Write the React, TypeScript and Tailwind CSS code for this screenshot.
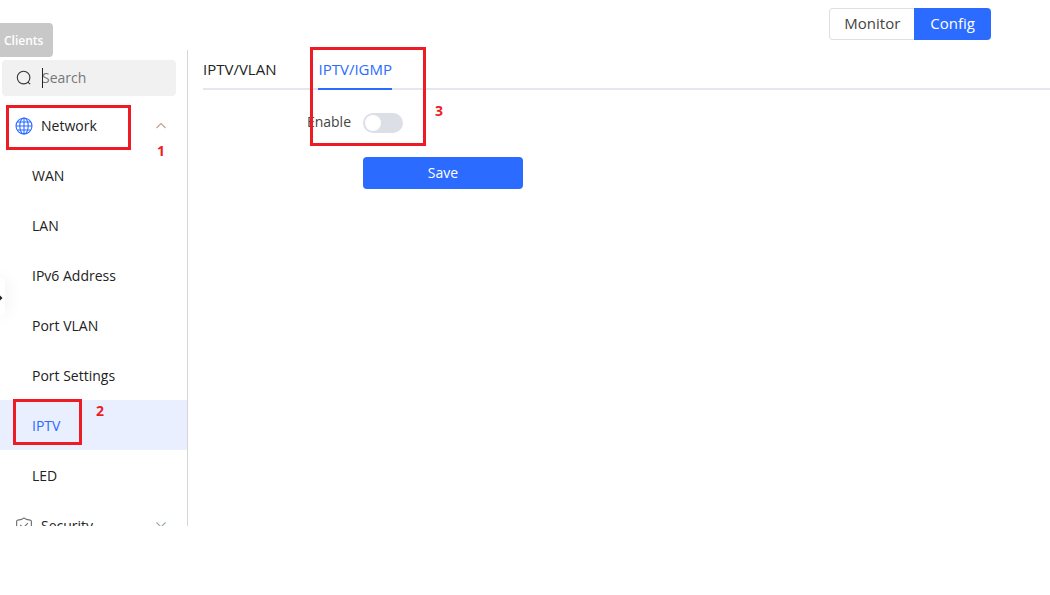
import React, { useState } from 'react';

const subItems = ['WAN', 'LAN', 'IPv6 Address', 'Port VLAN', 'Port Settings', 'IPTV', 'LED'];
const tabs = ['IPTV/VLAN', 'IPTV/IGMP'];

const SearchIcon = () => (
  <svg className="w-4 h-4 shrink-0" viewBox="0 0 16 16" fill="none" stroke="#333" strokeWidth="1.1">
    <circle cx="7.6" cy="7.6" r="6.3" />
    <path d="M11.8 12.2 L14.2 14.2" />
  </svg>
);

const GlobeIcon = () => (
  <svg className="w-[18px] h-[18px] shrink-0" viewBox="0 0 18 18" fill="none" stroke="#2b6bff" strokeWidth="1.1">
    <circle cx="9" cy="9" r="8" />
    <ellipse cx="9" cy="9" rx="4.2" ry="8" />
    <path d="M9 1 V17 M1 9 H17 M2.2 5 H15.8 M2.2 13 H15.8" />
  </svg>
);

const ShieldIcon = () => (
  <svg className="w-[18px] h-[18px] shrink-0" viewBox="0 0 18 18" fill="none" stroke="#777" strokeWidth="1.2">
    <path d="M9 1 L11.5 2.4 L15.2 3.1 Q16.4 3.4 16.4 4.6 V9 C16.4 13 13 15.6 9 17 C5 15.6 1.6 13 1.6 9 V4.6 Q1.6 3.4 2.8 3.1 L6.5 2.4 Z" />
    <path d="M5.2 8 L8.4 10.8 L12.8 6.2" />
  </svg>
);

const Chevron: React.FC<{ up?: boolean; color: string }> = ({ up, color }) => (
  <svg className="w-2.5 h-2.5 shrink-0" viewBox="0 0 10 10" fill="none" stroke={color} strokeWidth="1.1">
    <path d={up ? 'M0.5 7 L5 2.5 L9.5 7' : 'M0.5 1.5 L5 6 L9.5 1.5'} />
  </svg>
);

const App: React.FC = () => {
  const [mode, setMode] = useState('Config');
  const [active, setActive] = useState('IPTV');
  const [tab, setTab] = useState('IPTV/IGMP');
  const [enabled, setEnabled] = useState(false);
  const [query, setQuery] = useState('');

  return (
    <div className="relative min-h-screen overflow-x-hidden bg-white text-sm text-[#222] font-['Open_Sans','Noto_Sans',sans-serif]">
      <div className="absolute left-0 top-[23px] flex h-[34px] w-[53px] items-center rounded-r bg-[#c8c8c8] pt-0.5 pl-1 text-xs font-semibold text-white">
        Clients
      </div>
      <button type="button" aria-label="Expand" className="absolute left-0 top-[278px] z-10 flex h-[38px] w-[5px] items-center rounded-r-md bg-white pt-0.5 shadow-[0_0_16px_rgba(0,0,0,0.12)]">
        <svg className="h-2 w-[3px]" viewBox="0 0 3 8" fill="#222"><path d="M0 1.5 L2.5 4 L0 6.5 Z" /></svg>
      </button>

      <header className="flex h-[50px] justify-end pt-2 pr-[59px]">
        <div className="flex h-8 text-[15px]">
          <button
            type="button"
            onClick={() => setMode('Monitor')}
            className={mode === 'Monitor' ? 'rounded-l bg-[#2b6bff] px-3.5 text-white' : 'rounded-l border border-r-0 border-[#dcdfe6] px-3.5 text-[#444]'}
          >
            Monitor
          </button>
          <button
            type="button"
            onClick={() => setMode('Config')}
            className={mode === 'Config' ? 'rounded-r bg-[#2b6bff] px-4 text-white' : 'rounded-r border border-l-0 border-[#dcdfe6] px-4 text-[#444]'}
          >
            Config
          </button>
        </div>
      </header>

      <div className="flex">
        <aside className="h-[80vh] w-[188px] shrink-0 overflow-hidden border-r border-[#d6d6d6] pt-2.5">
          <div className="relative mb-1 ml-0.5 mr-[11px] flex h-9 items-center gap-2.5 rounded bg-[#f1f1f1] pl-3.5">
            <SearchIcon />
            <input
              type="text"
              aria-label="Search"
              placeholder="Search"
              value={query}
              onChange={(e) => setQuery(e.target.value)}
              className="min-w-0 flex-1 bg-transparent outline-none placeholder:text-[#777]"
            />
            <span className="absolute left-10 top-2 h-5 w-px bg-[#222]" />
          </div>
          <nav>
            <div className="relative">
              <button type="button" className="flex h-[50px] w-full items-center gap-2 pt-0.5 pl-[15px] pr-[21px]">
                <GlobeIcon />
                <span className="flex-1 text-left">Network</span>
                <Chevron up color="#c0a090" />
              </button>
              <span className="pointer-events-none absolute left-1.5 top-[5px] h-[45px] w-[125px] border-3 border-[#ed1c24]" />
              <span className="absolute left-[157px] top-[41px] font-bold text-[#ed1c24]">1</span>
            </div>
            {subItems.map((item) => (
              <div key={item} className="relative">
                <a
                  href="#"
                  onClick={() => setActive(item)}
                  className={`flex h-[50px] items-center pt-0.5 pl-8 ${active === item ? 'bg-[#e9efff] text-[#2b6bff]' : ''}`}
                >
                  {item}
                </a>
                {item === 'IPTV' && (
                  <>
                    <span className="pointer-events-none absolute left-[13px] -top-px h-[46px] w-[69px] border-3 border-[#ed1c24]" />
                    <span className="absolute left-24 top-px font-bold text-[#ed1c24]">2</span>
                  </>
                )}
              </div>
            ))}
            <button type="button" className="flex h-[50px] w-full items-center gap-2 pt-0.5 pl-[15px] pr-[21px]">
              <ShieldIcon />
              <span className="flex-1 text-left">Security</span>
              <Chevron color="#90a8b8" />
            </button>
          </nav>
        </aside>

        <main className="relative min-w-0 flex-1 pl-[15px]">
          <div className="flex h-10 gap-[42px] border-b-2 border-[#e4e7ed] text-[15px]">
            {tabs.map((t) => (
              <button
                key={t}
                type="button"
                onClick={() => setTab(t)}
                className={`-mb-0.5 border-b-2 pt-0.5 ${tab === t ? 'border-[#2b6bff] text-[#2b6bff]' : 'border-transparent'}`}
              >
                {t}
              </button>
            ))}
          </div>
          <form onSubmit={(e) => e.preventDefault()} className="pt-[22px]">
            <div className="flex h-[22px] items-center gap-3">
              <label htmlFor="enable" className="w-[148px] pb-0.5 text-right text-[#444]">Enable</label>
              <span className="relative flex h-5 w-10">
                <input
                  type="checkbox"
                  id="enable"
                  checked={enabled}
                  onChange={(e) => setEnabled(e.target.checked)}
                  className="peer h-5 w-10 appearance-none rounded-full bg-[#dcdfe6] checked:bg-[#2b6bff]"
                />
                <span className="pointer-events-none absolute left-0.5 top-0.5 h-4 w-4 rounded-full bg-white peer-checked:left-[22px]" />
              </span>
            </div>
            <button type="submit" className="ml-40 mt-[23px] h-8 w-40 rounded-sm bg-[#2b6bff] text-white">
              Save
            </button>
          </form>
          <span className="pointer-events-none absolute -top-[3px] left-[122px] h-[99px] w-[116px] border-3 border-[#ed1c24]" />
          <span className="absolute left-[247px] top-[51px] font-bold text-[#ed1c24]">3</span>
        </main>
      </div>
    </div>
  );
};

export default App;
